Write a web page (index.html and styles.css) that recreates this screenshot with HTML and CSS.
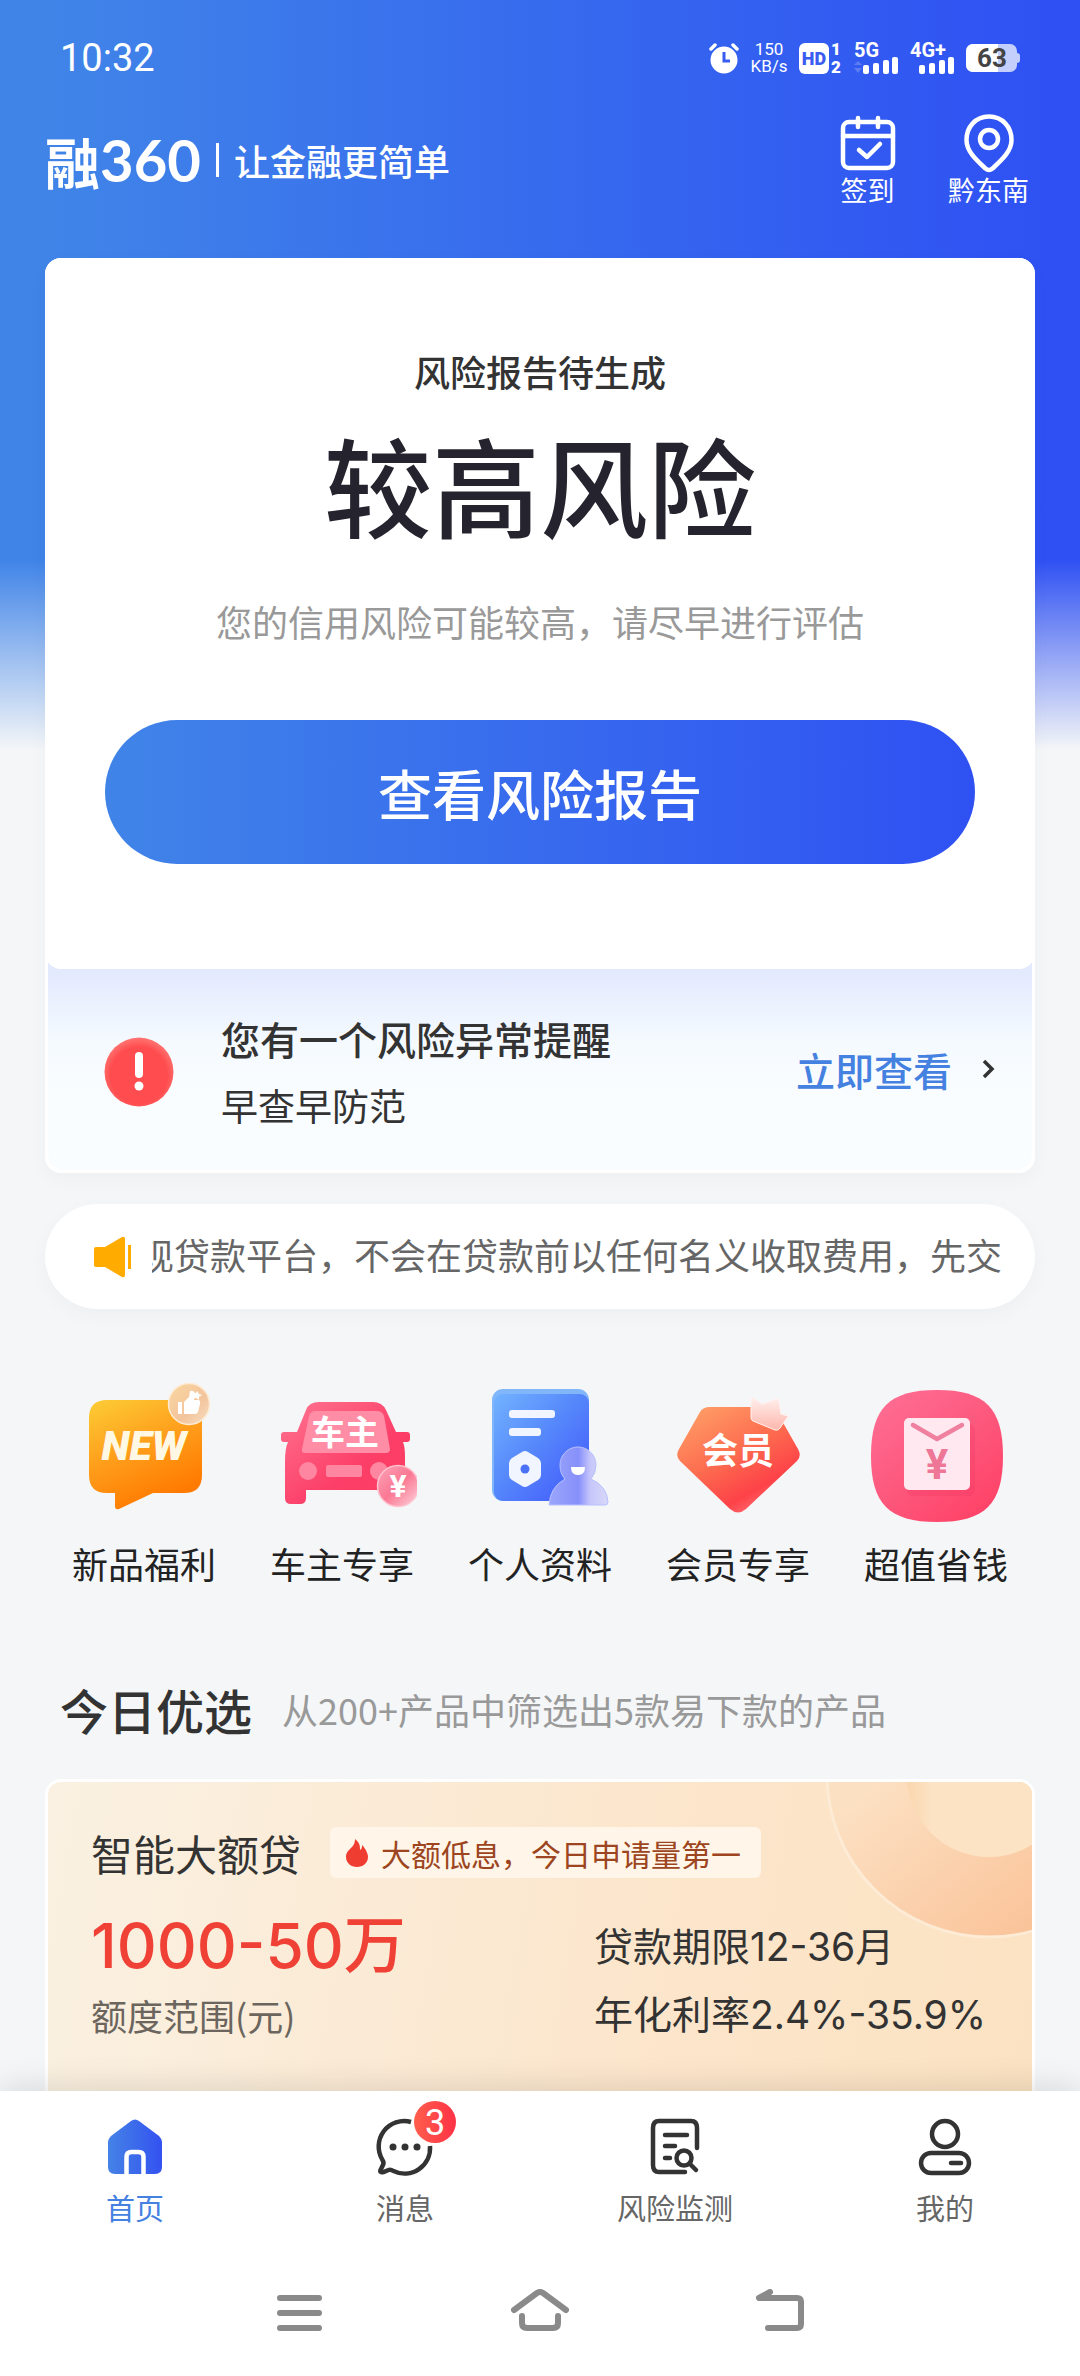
FILE: index.html
```html
<!DOCTYPE html>
<html lang="zh-CN">
<head>
<meta charset="utf-8">
<meta name="viewport" content="width=device-width, initial-scale=1">
<title>融360</title>
<link rel="stylesheet" href="styles.css">
</head>
<body>
<div class="app">
  <div class="status">
    <span class="clock">10:32</span>
    <div class="status-icons">
      <svg width="30" height="32" viewBox="0 0 30 32"><circle cx="15" cy="18" r="13.500" fill="#fff"/><path d="M2 7l4-4M28 7l-4-4" stroke="#fff" stroke-width="3.500" stroke-linecap="round"/><path d="M15 10v9h6" fill="none" stroke="#3a5cf0" stroke-width="3"/></svg>
      <span class="speed"><span>150</span><span>KB/s</span></span>
      <svg width="43" height="44" viewBox="0 -6 43 44"><rect y="1" width="30" height="31" rx="6" fill="#fff"/><text x="15" y="23" class="hd">HD</text><text x="37" y="13" class="sim">1</text><text x="37" y="31" class="sim">2</text></svg>
      <svg width="44" height="44" viewBox="0 -6 44 44"><text x="0" y="15" class="net">5G</text><g fill="#fff"><rect x="9" y="23" width="6" height="9" rx="2"/><rect x="19" y="21" width="6" height="11" rx="2"/><rect x="29" y="18" width="6" height="14" rx="2"/><rect x="38" y="15" width="6" height="17" rx="2"/></g><path d="M0 23l4-4 4 4zM0 26l4 5 4-5z" fill="#5c7cf4"/></svg>
      <svg width="44" height="44" viewBox="0 -6 44 44"><text x="0" y="15" class="net">4G+</text><g fill="#fff"><rect x="9" y="23" width="6" height="9" rx="2"/><rect x="19" y="21" width="6" height="11" rx="2"/><rect x="29" y="18" width="6" height="14" rx="2"/><rect x="38" y="15" width="6" height="17" rx="2"/></g></svg>
      <svg width="54" height="40" viewBox="0 -6 54 40"><rect width="51" height="28" rx="7" fill="#c4cffb"/><path d="M7 0h25v28H7a7 7 0 0 1-7-7V7a7 7 0 0 1 7-7z" fill="#fff"/><path d="M51 9q3 0 3 3v4q0 3-3 3z" fill="#c4cffb"/><text x="26" y="23" class="battery">63</text></svg>
    </div>
  </div>

  <header class="appbar">
    <div class="brand">
      <span class="logo"><span class="logo-han">融</span><span class="logo-num">360</span></span>
      <span class="divider"></span>
      <span class="slogan">让金融更简单</span>
    </div>
    <nav class="shortcuts">
      <a class="shortcut" href="#checkin">
        <svg width="60" height="60" viewBox="0 0 60 60" fill="none" stroke="#fff" stroke-width="4.500" stroke-linecap="round" stroke-linejoin="round"><rect x="5" y="8" width="50" height="46" rx="6"/><path d="M5 22h50M20 4v9M40 4v9"/><path d="M21 36l8 7 13-13"/></svg>
        <span>签到</span>
      </a>
      <a class="shortcut" href="#city">
        <svg width="60" height="60" viewBox="0 0 60 60" fill="none" stroke="#fff" stroke-width="4.500"><path d="M30 2.500C16.500 2.500 7.500 13 7.500 26c0 12 11 21 19 28.500q3.500 3 7 0c8-7.500 19-16.500 19-28.500C52.500 13 43.500 2.500 30 2.500z"/><circle cx="30" cy="25" r="9"/></svg>
        <span>黔东南</span>
      </a>
    </nav>
  </header>

  <main class="content">
    <section class="report">
      <div class="summary">
        <p class="report-state">风险报告待生成</p>
        <h1 class="risk">较高风险</h1>
        <p class="hint">您的信用风险可能较高，请尽早进行评估</p>
        <button class="cta" type="button">查看风险报告</button>
      </div>
      <div class="alert">
        <svg class="alert-icon" width="70" height="70" viewBox="0 0 70 70"><defs><radialGradient id="gr" cx=".5" cy=".55" r=".55"><stop offset=".75" stop-color="#ff4c4f"/><stop offset="1" stop-color="#ff7673"/></radialGradient></defs><circle cx="35" cy="35" r="34.500" fill="url(#gr)"/><rect x="31" y="15" width="8" height="26" rx="4" fill="#fff"/><circle cx="35" cy="49" r="4.500" fill="#fff"/></svg>
        <div class="alert-text">
          <p class="alert-title">您有一个风险异常提醒</p>
          <p class="alert-sub">早查早防范</p>
        </div>
        <a class="alert-link" href="#alert">立即查看
          <svg width="16" height="24" viewBox="0 0 16 24"><path d="M4 4l8 8-8 8" fill="none" stroke="#333" stroke-width="3.500"/></svg>
        </a>
      </div>
    </section>

    <div class="notice">
      <svg class="horn" width="40" height="42" viewBox="0 0 40 42" fill="#ffab00"><path d="M3 11h9L29 1q3-1 3 2v36q0 3-3 2L12 31H3q-2 0-2-2V13q0-2 2-2z"/><path d="M35 9h3v24h-3z"/></svg>
      <p class="ticker"><span>现贷款平台，不会在贷款前以任何名义收取费用，先交</span></p>
    </div>

    <nav class="quick">
      <a class="quick-item" href="#new">
        <svg width="150" height="150" viewBox="0 0 150 150">
          <defs><linearGradient id="g1" x1="0" y1="0" x2=".45" y2="1"><stop offset="0" stop-color="#fccd36"/><stop offset=".5" stop-color="#ffa01c"/><stop offset="1" stop-color="#ff7a00"/></linearGradient><linearGradient id="g1b" x1="0" y1="0" x2="1" y2="1"><stop offset="0" stop-color="#fad7a0"/><stop offset=".6" stop-color="#f3c49c"/><stop offset="1" stop-color="#f6e0c4"/></linearGradient></defs>
          <path d="M38 24h77q18 0 18 18v57q0 18-18 18H84l-34 16q-4 1-4-3v-13h-8q-18 0-18-18V42q0-18 18-18z" fill="url(#g1)"/>
          <text x="75" y="84" class="art-new">NEW</text>
          <circle cx="120" cy="28" r="20.500" fill="url(#g1b)" stroke="#fdebd3" stroke-width="1.500"/>
          <path d="M109 26h4v12h-4zM115 26l5-5 1-6q5-1 5 4l-1 5h4q3 0 2 4l-2 8q-1 2-3 2h-11zM128 15l2 3 3 1-3 2v3l-3-2-3 1 1-3-1-3 3 0z" fill="#fff"/>
        </svg>
        <span>新品福利</span>
      </a>
      <a class="quick-item" href="#car">
        <svg width="150" height="150" viewBox="0 0 150 150">
          <defs><linearGradient id="g2" x1="0" y1="0" x2="1" y2="1"><stop offset="0" stop-color="#ff7592"/><stop offset=".6" stop-color="#fc3f68"/><stop offset="1" stop-color="#fd3c62"/></linearGradient><linearGradient id="g2b" x1="0" y1="0" x2="1" y2="1"><stop offset="0" stop-color="#fda3b8"/><stop offset=".5" stop-color="#fb7893"/><stop offset="1" stop-color="#fdd5de"/></linearGradient></defs>
          <path d="M52 26h54q9 0 13 8l10 22h11q3 0 3 3v4q0 3-3 3h-4q2 5 2 14v34H39v8q0 6-6 6h-9q-6 0-6-6V86q0-14 3-20h-4q-3 0-3-3v-4q0-3 3-3h13l9-22q3-8 13-8z" fill="url(#g2)"/>
          <path d="M48 35h62q5 0 7 5l6 33q0 4-4 4H38q-4 0-3-4l7-33q2-5 6-5z" fill="#ff8da5"/>
          <g fill="#ff86a0"><circle cx="41" cy="95" r="9"/><circle cx="112" cy="95" r="9"/><rect x="59" y="89" width="36" height="12" rx="2"/></g>
          <text x="78" y="69" class="art-car">车主</text>
          <circle cx="131" cy="110" r="20.500" fill="url(#g2b)" stroke="#ffc2cf" stroke-width="1.500"/>
          <text x="131" y="121" class="art-yen">¥</text>
        </svg>
        <span>车主专享</span>
      </a>
      <a class="quick-item" href="#profile">
        <svg width="150" height="150" viewBox="0 0 150 150">
          <defs><linearGradient id="g3" x1="0" y1="0" x2="1" y2="1"><stop offset="0" stop-color="#72b3ff"/><stop offset=".45" stop-color="#5688fb"/><stop offset="1" stop-color="#4054fb"/></linearGradient><linearGradient id="g3b" x1="0" y1="0" x2="1" y2="0"><stop offset="0" stop-color="#9aa6fb"/><stop offset=".5" stop-color="#8790fa"/><stop offset=".7" stop-color="#c6c6fb"/><stop offset="1" stop-color="#d9d8fb"/></linearGradient></defs>
          <rect x="27" y="13" width="97" height="112" rx="11" fill="#82b6fb"/>
          <rect x="29" y="18" width="95" height="107" rx="9" fill="url(#g3)"/>
          <g fill="#f0f5ff"><rect x="44" y="34" width="46" height="8" rx="3"/><rect x="44" y="52" width="32" height="8" rx="3"/><path d="M57 76q3-2 6 0l10 6q3 2 3 5v12q0 3-3 5l-10 6q-3 2-6 0l-10-6q-3-2-3-5V87q0-3 3-5z"/></g>
          <circle cx="60" cy="93" r="4.500" fill="#4a72f8"/>
          <path d="M84 129q1-18 16-26-5-5-5-14a18 18 0 0 1 36 0q0 8-5 14 16 7 17 23 0 3-3 3z" fill="url(#g3b)" stroke="#b9c0fd" stroke-width="1"/>
          <path d="M106 91h14q0 8-7 8t-7-8z" fill="#fff"/>
        </svg>
        <span>个人资料</span>
      </a>
      <a class="quick-item" href="#member">
        <svg width="150" height="150" viewBox="0 0 150 150">
          <defs><linearGradient id="g4" x1=".1" y1="0" x2=".75" y2="1"><stop offset="0" stop-color="#ffa068"/><stop offset=".45" stop-color="#fd6f50"/><stop offset=".8" stop-color="#fd4248"/><stop offset="1" stop-color="#ff7a80"/></linearGradient><linearGradient id="g4b" x1="0" y1="0" x2="0" y2="1"><stop offset="0" stop-color="#fff0ee"/><stop offset="1" stop-color="#fdb6ac"/></linearGradient></defs>
          <path d="M47 31h57q7 0 10 5l21 37q4 7-1 12l-51 48q-8 7-16 0L17 85q-5-5-1-12l21-37q3-5 10-5z" fill="url(#g4)"/>
          <text x="75" y="88" class="art-vip">会员</text>
          <path d="M88 23q1-3 3-1l8 6 14-5q3-1 3 2l2 13 7 2q1 1-1 2l-7 10q-2 3-5 2l-22-9q-2-1-2-3z" fill="url(#g4b)" stroke="#fff4f2" stroke-width="1"/>
        </svg>
        <span>会员专享</span>
      </a>
      <a class="quick-item" href="#save">
        <svg width="150" height="150" viewBox="0 0 150 150">
          <defs><linearGradient id="g5" x1="0" y1="0" x2=".8" y2="1"><stop offset="0" stop-color="#ff7096"/><stop offset=".5" stop-color="#fd5a7f"/><stop offset="1" stop-color="#ff4267"/></linearGradient></defs>
          <path d="M76 14c48 0 66 18 66 66 0 48-18 66-66 66s-66-18-66-66 18-66 66-66z" fill="url(#g5)"/>
          <rect x="46" y="48" width="68" height="72" rx="6" fill="#f03560" opacity=".25"/>
          <rect x="43" y="42" width="66" height="72" rx="5" fill="#ffe8f0"/>
          <path d="M52 49l24 14 25-14" fill="none" stroke="#f0809f" stroke-width="4.500" stroke-linecap="round" stroke-linejoin="round"/>
          <text x="76" y="103" class="art-envelope">¥</text>
        </svg>
        <span>超值省钱</span>
      </a>
    </nav>

    <div class="section-head">
      <h2>今日优选</h2>
      <p>从200+产品中筛选出5款易下款的产品</p>
    </div>

    <article class="loan">
      <svg class="loan-art" width="208" height="164" viewBox="0 0 208 164"><defs><linearGradient id="g6" x1="0" y1="0" x2=".8" y2="1"><stop offset=".4" stop-color="#fce0c2"/><stop offset="1" stop-color="#fabe92"/></linearGradient><linearGradient id="g7" x1="0" y1="0" x2="1" y2="0"><stop offset="0" stop-color="#fad6ae"/><stop offset=".15" stop-color="#fce3c4"/></linearGradient></defs><circle cx="165" cy="-7" r="162" fill="url(#g6)" stroke="#fdebd6" stroke-width="3"/><circle cx="165" cy="-7" r="82" fill="url(#g7)"/></svg>
      <div class="loan-head">
        <h3>智能大额贷</h3>
        <span class="tag"><svg width="24" height="30" viewBox="0 0 24 30"><path d="M10 1c5 4 5 7 5 11 2-1 2-3 2-5 4 4 6 9 6 12 0 6-5 10-11 10S1 25 1 19c0-5 3-7 6-10 2-2 3-5 3-8z" fill="#f03d32"/></svg>大额低息，今日申请量第一</span>
      </div>
      <div class="loan-body">
        <div class="loan-amount">
          <p class="amount">1000-50万</p>
          <p class="amount-label">额度范围(元)</p>
        </div>
        <div class="loan-terms">
          <p>贷款期限12-36月</p>
          <p>年化利率2.4%-35.9%</p>
        </div>
      </div>
    </article>
  </main>

  <footer class="bottom">
    <nav class="tabs">
      <a class="tab active" href="#home">
        <svg width="60" height="60" viewBox="0 0 60 60"><defs><linearGradient id="g8" x1="0" y1="0" x2="1" y2="0"><stop offset="0" stop-color="#4583e6"/><stop offset="1" stop-color="#3352f0"/></linearGradient></defs><path d="M26 4q4-3 8 0l20 15q3 3 3 6v25q0 7-7 7H10q-7 0-7-7V25q0-3 3-6z" fill="url(#g8)"/><path d="M21.500 58V40q0-5 5-5h7q5 0 5 5v18" fill="none" stroke="#fff" stroke-width="4.500"/></svg>
        <span>首页</span>
      </a>
      <a class="tab" href="#messages">
        <span class="tab-icon">
          <svg width="60" height="60" viewBox="0 0 60 60"><path d="M36 5A25.500 25.500 0 0 0 7.500 43q2 3 0 6l-2 4q-1 3 3 2l5-2q2-1 5 1A25.500 25.500 0 0 0 55 29" fill="none" stroke="#333" stroke-width="4.500"/><g fill="#333"><circle cx="18" cy="30" r="3.500"/><circle cx="30" cy="30" r="3.500"/><circle cx="42" cy="30" r="3.500"/></g></svg>
          <span class="badge">3</span>
        </span>
        <span>消息</span>
      </a>
      <a class="tab" href="#monitor">
        <svg width="60" height="60" viewBox="0 0 60 60" fill="none" stroke="#333" stroke-width="4.500" stroke-linecap="round"><path d="M40 55H14q-6 0-6-7V11q0-7 6-7h32q6 0 6 7v20M20 18h22M20 29h10M20 41h5"/><circle cx="39" cy="41" r="7.500"/><path d="M45 47l6 6"/></svg>
        <span>风险监测</span>
      </a>
      <a class="tab" href="#mine">
        <svg width="60" height="60" viewBox="0 0 60 60" fill="none" stroke="#333" stroke-width="4.500" stroke-linecap="round"><circle cx="30" cy="17" r="13"/><rect x="6" y="36" width="48" height="20" rx="10"/><path d="M36 46h10"/></svg>
        <span>我的</span>
      </a>
    </nav>
    <div class="system-nav">
      <button type="button" aria-label="最近任务"><svg width="60" height="50" viewBox="0 0 60 50"><path d="M10 9h39M10 24h39M10 39h39" stroke="#8a8a8a" stroke-width="6" stroke-linecap="round"/></svg></button>
      <button type="button" aria-label="主屏幕"><svg width="60" height="50" viewBox="0 0 60 50" fill="none" stroke="#8a8a8a" stroke-width="6" stroke-linecap="round" stroke-linejoin="round"><path d="M4 21L27 4q3-2 6 0l23 17M12 27v7q0 5 5 5h26q5 0 5-5v-7"/></svg></button>
      <button type="button" aria-label="返回"><svg width="60" height="50" viewBox="0 0 60 50" fill="none" stroke="#8a8a8a" stroke-width="6" stroke-linecap="round" stroke-linejoin="round"><path d="M20 3L9 9h38q4 0 4 4v22q0 4-4 4H18"/></svg></button>
    </div>
  </footer>
</div>
</body>
</html>
```
FILE: styles.css
```css
* { box-sizing: border-box; margin: 0; padding: 0; }

body {
  background: #f4f6f8;
  color: #333;
  font-family: "Noto Sans CJK SC", sans-serif;
}

a { color: inherit; text-decoration: none; }
svg { display: block; flex: none; }
button { border: 0; background: none; font: inherit; cursor: pointer; }

.app {
  display: flex;
  flex-direction: column;
  min-height: 100vh;
  background:
    linear-gradient(to bottom, rgba(244, 246, 248, 0) 560px, #f4f6f8 750px),
    linear-gradient(to right, #4084e8 5%, #376bee 50%, #2f51f3 97%);
}

/* status bar */
.status {
  display: flex;
  justify-content: space-between;
  align-items: center;
  height: 42px;
  margin-top: 37px;
  padding: 0 60px;
  color: #fff;
}
.clock { font: 400 38px/42px Roboto, sans-serif; }
.status-icons { display: flex; align-items: center; gap: 12px; }
.speed {
  display: flex;
  flex-direction: column;
  width: 36px;
  align-items: center;
  font: 400 17px/17px Roboto, sans-serif;
}
.hd, .sim, .battery { text-anchor: middle; font-family: Roboto, sans-serif; font-weight: 900; }
.hd { font-size: 18px; fill: #3a5cf0; }
.sim { font-size: 17px; fill: #fff; }
.battery { font-size: 26px; font-weight: 700; fill: #444; }
.net { font: 700 20px Roboto, sans-serif; fill: #fff; }

/* app bar */
.appbar {
  display: flex;
  justify-content: space-between;
  align-items: center;
  margin: 35px 31px 52px 45px;
  color: #fff;
}
.brand { display: flex; align-items: center; gap: 15px; }
.logo { display: flex; align-items: center; height: 60px; }
.logo-han { font-size: 55px; font-weight: 700; line-height: 60px; }
.logo-num { font: 700 58px/60px Lato, sans-serif; }
.divider { width: 3px; height: 34px; background: #fff; }
.slogan { font-size: 36px; font-weight: 500; line-height: 48px; }
.shortcuts { display: flex; }
.shortcut {
  display: flex;
  flex-direction: column;
  align-items: center;
  width: 121px;
  font-size: 27px;
  line-height: 32px;
}

/* report card */
.content { display: flex; flex-direction: column; flex: 1; padding: 0 45px; }
.report {
  padding-bottom: 3px;
  background: #fff;
  border-radius: 16px;
  box-shadow: 0 6px 20px rgba(0, 0, 0, 0.03);
}
.summary {
  position: relative;
  display: flex;
  flex-direction: column;
  padding: 86px 60px 105px;
  border-radius: 16px;
  background: #fff;
  text-align: center;
}
.report-state { font-size: 36px; font-weight: 500; line-height: 54px; }
.risk { margin-top: 21px; font-size: 108px; font-weight: 500; line-height: 128px; color: #25242e; }
.hint { margin-top: 47px; font-size: 36px; line-height: 54px; color: #999; }
.cta {
  height: 144px;
  margin-top: 72px;
  border-radius: 72px;
  background: linear-gradient(to right, #4084e8, #2f51f3);
  color: #fff;
  font-size: 54px;
  font-weight: 500;
}
.alert {
  display: flex;
  align-items: center;
  height: 217px;
  margin: -16px 3px 0;
  padding: 20px 36px 0 56px;
  border-radius: 0 0 16px 16px;
  background: linear-gradient(to bottom, #e4eafe 20px, #edf3fe 58px, #f5faff 90px, #fafdff 150px);
}
.alert-text { flex: 1; margin-left: 47px; }
.alert-title { font-size: 39px; font-weight: 500; line-height: 66px; }
.alert-sub { font-size: 37px; line-height: 68px; }
.alert-link {
  display: flex;
  align-items: center;
  gap: 28px;
  margin-bottom: 6px;
  color: #4581e0;
  font-size: 39px;
  font-weight: 500;
}

/* notice */
.notice {
  display: flex;
  align-items: center;
  gap: 19px;
  height: 105px;
  margin-top: 31px;
  padding: 0 33px 0 48px;
  border-radius: 53px;
  background: #fff;
  box-shadow: 0 6px 20px rgba(0, 0, 0, 0.03);
}
.ticker {
  display: flex;
  flex: 1;
  min-width: 0;
  justify-content: flex-end;
  padding-bottom: 6px;
  overflow: hidden;
  font-size: 36px;
  line-height: 54px;
  white-space: nowrap;
  color: #666;
}

/* quick entries */
.quick { display: grid; grid-template-columns: repeat(5, 1fr); margin-top: 67px; }
.quick-item {
  display: flex;
  flex-direction: column;
  align-items: center;
  gap: 13px;
  font-size: 36px;
  line-height: 48px;
  color: #222;
}
.art-new, .art-yen, .art-envelope { text-anchor: middle; font-family: Roboto, sans-serif; }
.art-new { font-size: 41px; font-weight: 900; font-style: italic; fill: #fff8e4; }
.art-yen { font-size: 32px; font-weight: 700; fill: #fff; }
.art-envelope { font-size: 42px; font-weight: 700; fill: #ee7697; }
.art-car, .art-vip { text-anchor: middle; font-weight: 700; fill: #fff; }
.art-car { font-size: 34px; }
.art-vip { font-size: 36px; }

/* picks */
.section-head {
  display: flex;
  align-items: center;
  gap: 30px;
  margin: 90px 15px 38px;
}
.section-head h2 { font-size: 48px; font-weight: 500; line-height: 64px; }
.section-head p { font-size: 36px; line-height: 64px; color: #999; }

.loan {
  position: relative;
  flex: 1;
  padding: 45px 43px 51px;
  border: 3px solid #fff;
  border-bottom: 0;
  border-radius: 16px 16px 0 0;
  background: linear-gradient(100deg, #faf1e2, #fce6cc 60%, #fbe2c2);
  overflow: hidden;
}
.loan-art { position: absolute; top: 0; right: 0; }
.loan-head { display: flex; align-items: center; gap: 29px; }
.loan-head h3 { font-size: 42px; font-weight: 400; line-height: 51px; }
.tag {
  display: flex;
  align-items: center;
  gap: 12px;
  height: 51px;
  padding: 0 20px 0 15px;
  border-radius: 6px;
  background: #fff5e8;
  color: #9c4520;
  font-size: 30px;
}
.loan-body { display: grid; grid-template-columns: 56% 44%; align-items: end; margin-top: 30px; }
.amount {
  font: 500 62px/76px Inter, "Noto Sans CJK SC", sans-serif;
  color: #ef4136;
}
.amount-label { margin-top: 6px; font-size: 36px; line-height: 50px; color: #6b655e; }
.loan-terms {
  display: grid;
  gap: 18px;
  font: 400 39px/50px Inter, "Noto Sans CJK SC", sans-serif;
  white-space: nowrap;
}

/* bottom bars */
.bottom { position: relative; background: #fff; box-shadow: 0 -4px 30px rgba(0, 0, 0, 0.12); }
.tabs { display: grid; grid-template-columns: repeat(4, 1fr); padding-top: 26px; }
.tab {
  display: flex;
  flex-direction: column;
  align-items: center;
  gap: 10px;
  font-size: 29px;
  line-height: 40px;
  color: #666;
}
.tab.active { color: #4581e0; }
.tab-icon { position: relative; }
.badge {
  position: absolute;
  top: -16px;
  right: -21px;
  width: 42px;
  height: 42px;
  border-radius: 50%;
  background: linear-gradient(to right, #ff5e4c, #ff3246);
  box-shadow: 0 0 0 2px #fff;
  color: #fff;
  font: 400 36px/44px Roboto, sans-serif;
  text-align: center;
}
.system-nav {
  display: flex;
  justify-content: center;
  gap: 180px;
  padding: 62px 0 37px;
}
```
